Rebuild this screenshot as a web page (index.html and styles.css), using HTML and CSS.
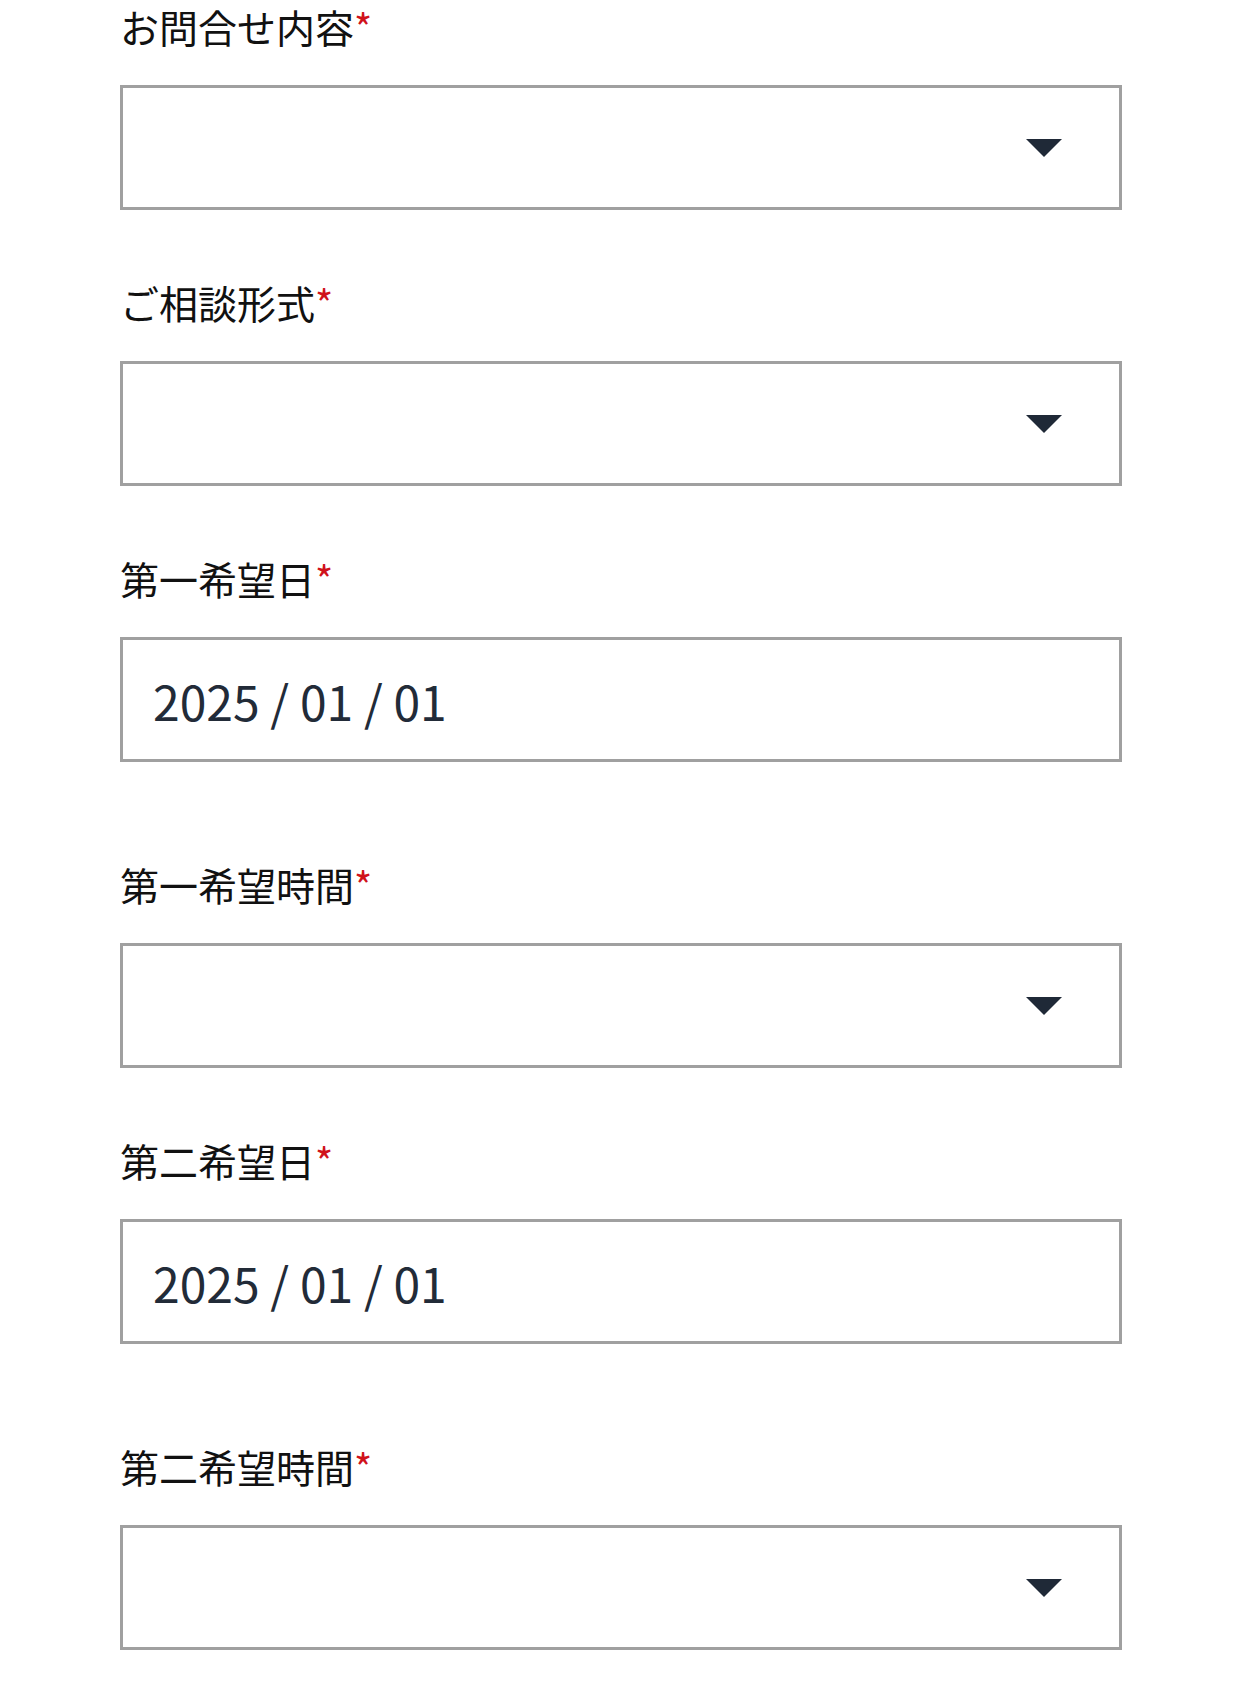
FILE: index.html
```html
<!DOCTYPE html>
<html lang="ja">
<head>
    <meta charset="UTF-8">
    <meta name="viewport" content="width=device-width, initial-scale=1.0">
    <title>お問合せフォーム</title>
    <link rel="stylesheet" href="styles.css">
</head>
<body>
    <form class="contact-form">
        <div class="field">
            <label class="field-label">お問合せ内容<span class="required">*</span></label>
            <div class="select-box"><span class="caret"></span></div>
        </div>

        <div class="field">
            <label class="field-label">ご相談形式<span class="required">*</span></label>
            <div class="select-box"><span class="caret"></span></div>
        </div>

        <div class="field field-date">
            <label class="field-label">第一希望日<span class="required">*</span></label>
            <div class="date-box">2025 / 01 / 01</div>
        </div>

        <div class="field">
            <label class="field-label">第一希望時間<span class="required">*</span></label>
            <div class="select-box"><span class="caret"></span></div>
        </div>

        <div class="field field-date">
            <label class="field-label">第二希望日<span class="required">*</span></label>
            <div class="date-box">2025 / 01 / 01</div>
        </div>

        <div class="field">
            <label class="field-label">第二希望時間<span class="required">*</span></label>
            <div class="select-box"><span class="caret"></span></div>
        </div>
    </form>
</body>
</html>
```

FILE: styles.css
```css
body {
    margin: 0;
    padding: 0;
    background: #ffffff;
    font-family: "Noto Sans CJK JP", "Noto Sans", sans-serif;
    color: #111111;
}
.contact-form {
    display: flex;
    flex-direction: column;
    gap: 66px;
    padding: 0 120px;
}
.field {
    display: flex;
    flex-direction: column;
    gap: 33px;
}
.field-date {
    margin-bottom: 30px;
}
.field-label {
    font-size: 39px;
    line-height: 52px;
    color: #111111;
}
.required {
    color: #d0121b;
}
.select-box,
.date-box {
    box-sizing: border-box;
    height: 125px;
    border: 3px solid #a0a0a0;
    background: #ffffff;
    display: flex;
    align-items: center;
}
.select-box {
    justify-content: flex-end;
    padding-right: 57px;
}
.caret {
    width: 0;
    height: 0;
    border-left: 18px solid transparent;
    border-right: 18px solid transparent;
    border-top: 18px solid #1f2937;
}
.date-box {
    padding-left: 30px;
    font-size: 48px;
    color: #222b38;
}
```
